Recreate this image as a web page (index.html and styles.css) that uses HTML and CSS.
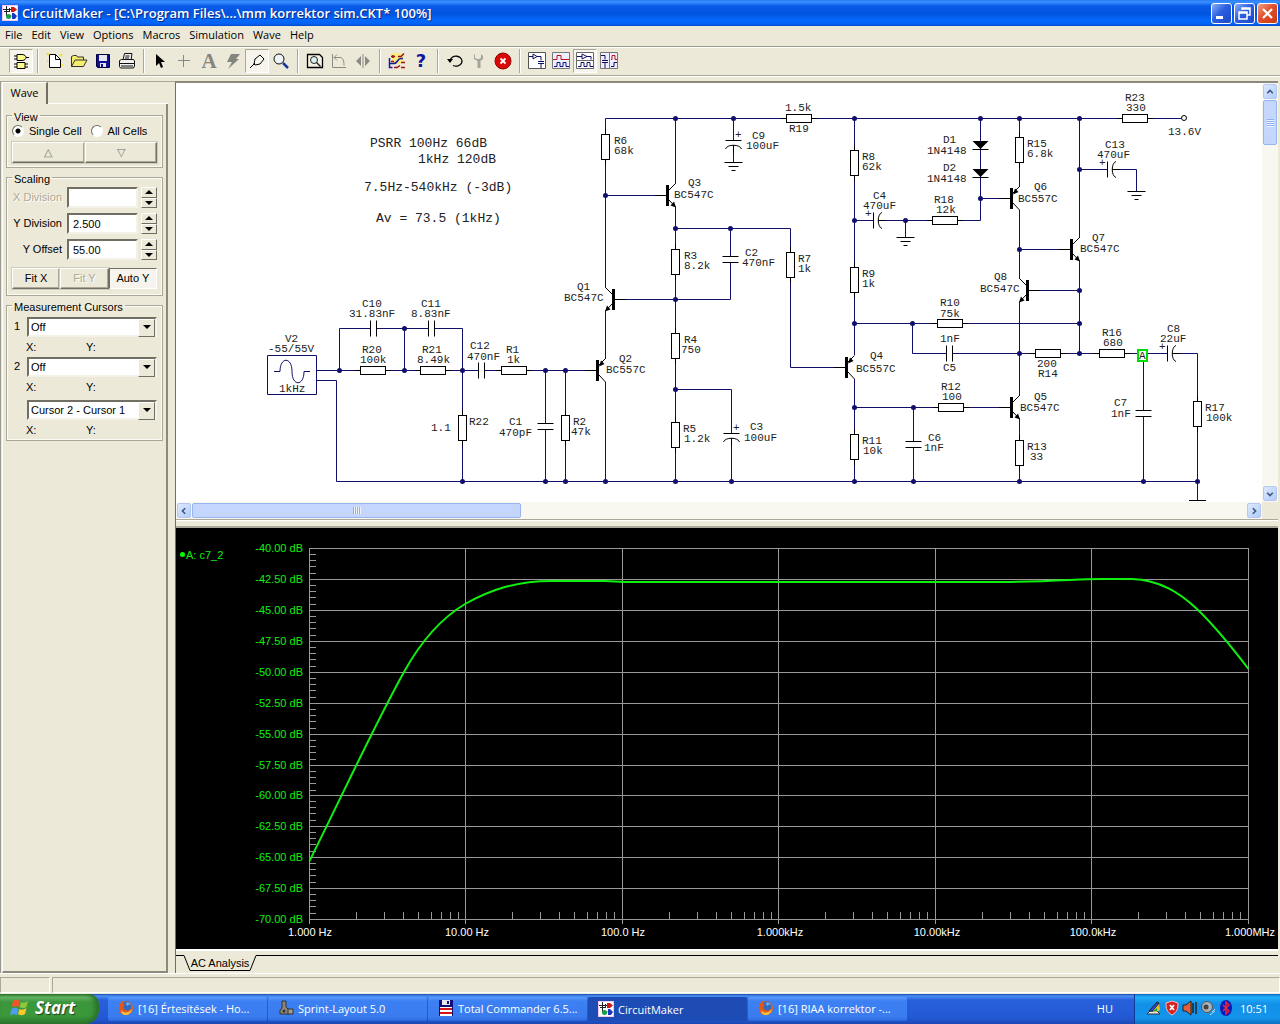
FILE: index.html
```html
<!DOCTYPE html>
<html lang="en">
<head>
<meta charset="utf-8">
<title>CircuitMaker</title>
<link rel="stylesheet" href="styles.css">
</head>
<body>
<svg class="defs" aria-hidden="true">
  <symbol id="app" viewBox="0 0 16 16"><rect width="16" height="16" fill="#f4c8ee"/><rect x="1" y="1" width="14" height="14" fill="#fff"/><path d="M1 4.500h9M4.500 1v10h5M7.500 3v4M2 6.500h5" stroke="#222" fill="none"/><path d="M9 2h3l3 2.500-3 2.500H9z" fill="#d01818"/><circle cx="6.500" cy="11.500" r="2.500" fill="#18a048"/><path d="M10 8h2l3 3-2 3h-3z" fill="#1838c0"/></symbol>
  <symbol id="firefox" viewBox="0 0 16 16"><circle cx="8" cy="8" r="7" fill="#e8641b"/><circle cx="8.500" cy="6.500" r="5" fill="#2f6bc4"/><path d="M8 3c2-1 4 0 5 2-2-1-3 0-4 1z" fill="#6fb4ee"/><path d="M1 6C2 3 3 2 5 1c0 2 0 3 2 4-2 1-2 2-1 4 2 2 5 2 8-1-1 4-3 7-7 7S0 11 1 6z" fill="#e2571a"/><path d="M3 10c2 3 7 4 11-1-1 4-3 6-7 6-2 0-4-2-4-5z" fill="#f8c03a"/></symbol>
</svg>

<header class="titlebar">
  <svg class="i16"><use href="#app"/></svg>
  <h1>CircuitMaker - [C:\Program Files\...\mm korrektor sim.CKT* 100%]</h1>
  <div class="winbtns">
    <button aria-label="Minimize"><svg viewBox="0 0 19 19"><path d="M4 12h7v3H4z" fill="#fff"/></svg></button>
    <button aria-label="Restore"><svg viewBox="0 0 19 19"><path d="M7 6V4h8v7h-3M7 5h8M4 8h8v7H4zM4 9h8" fill="none" stroke="#fff" stroke-width="1.500"/></svg></button>
    <button class="close" aria-label="Close"><svg viewBox="0 0 19 19"><path d="M5 5l9 9M14 5l-9 9" stroke="#fff" stroke-width="2.200"/></svg></button>
  </div>
</header>

<nav class="menu">
  <button>File</button><button>Edit</button><button>View</button><button>Options</button><button>Macros</button><button>Simulation</button><button>Wave</button><button>Help</button>
</nav>

<div class="toolbar">
  <button class="on" aria-label="Parts"><svg viewBox="0 0 18 18"><path d="M5 2.500h5c3 0 4 2 4 3s-1 3-4 3H5zM2 4h3M2 7h3M14 5.500h3M5 10.500h8v6H5zM2 12h3M2 15h3M13 12h3M13 15h3" fill="#ffff90" stroke="#000"/></svg></button>
  <i class="sep"></i>
  <button aria-label="New"><svg viewBox="0 0 18 18"><path d="M3.500 2.500h6l5 5v8h-11z" fill="#fff" stroke="#000"/><path d="M9.500 2.500v5h5" fill="none" stroke="#000"/><path d="M1 1l2 2M16 2l-2 2M1 9h1M16 13h1" stroke="#e8e040" stroke-width="2"/></svg></button>
  <button aria-label="Open"><svg viewBox="0 0 18 18"><path d="M1.500 14.500V4.500l2-1h3l1 1.500h6V8M1.500 14.500L5 8h12l-3.500 6.500z" fill="#f4ee70" stroke="#333"/></svg></button>
  <button aria-label="Save"><svg viewBox="0 0 18 18"><path d="M2.500 2.500h13v13h-12l-1-1z" fill="#101090" stroke="#000040"/><path d="M5 3h8v6H5zM6 11h6v4H6z" fill="#e6e6f0"/><path d="M7 12h2v3H7z" fill="#101090"/></svg></button>
  <button aria-label="Print"><svg viewBox="0 0 18 18"><path d="M5 8l1.500-6.500H14L13 8M7.500 4h4M7 6h4M1.500 8.500l2-1h12l1 1.500v5l-1 2h-13l-1-1.500zM1.500 11.500h15M3 14h12" fill="#efefef" stroke="#111"/></svg></button>
  <i class="sep"></i>
  <button aria-label="Select"><svg viewBox="0 0 18 18"><path d="M4 2v12l3-3 2 5 2-1-2-5h4z" fill="#000"/></svg></button>
  <button aria-label="Wire"><svg viewBox="0 0 18 18"><path d="M7.500 3v12M2 8.500h12" stroke="#888"/></svg></button>
  <button aria-label="Text" class="letter">A</button>
  <button aria-label="Delete"><svg viewBox="0 0 18 18"><path d="M7 2h9l-4 5h3L4 17l4-7H3z" fill="#858580"/></svg></button>
  <button class="on" aria-label="Probe"><svg viewBox="0 0 18 18"><path d="M2 16l5-5M6 12l1-5 5-4 4 4-4 5-5 1z" fill="#f8f8ee" stroke="#000"/></svg></button>
  <button aria-label="Zoom"><svg viewBox="0 0 18 18"><circle cx="7" cy="7" r="5" fill="#eef4f8" stroke="#111"/><path d="M11 11l5 5" stroke="#1838a0" stroke-width="2.500"/></svg></button>
  <i class="sep"></i>
  <button aria-label="Fit to window"><svg viewBox="0 0 18 18"><path d="M1.500 2.500h12l3 3v10h-15z" fill="#f4f2e4" stroke="#000" stroke-width="1.300"/><circle cx="8" cy="8" r="3.500" fill="#d8efec" stroke="#222"/><path d="M10.500 10.500l4 4" stroke="#222" stroke-width="1.500"/></svg></button>
  <button aria-label="Rotate"><svg viewBox="0 0 18 18"><path d="M2.500 2v13.500H16M4 5.500h6c3 0 4 3 4 8M4 5.500l3-3M4 5.500l3 3" fill="none" stroke="#8b8b84"/></svg></button>
  <button aria-label="Mirror"><svg viewBox="0 0 18 18"><path d="M7 4v10L2 9zM11 4v10l5-5z" fill="#8b8b84"/><path d="M9 2v14" stroke="#8b8b84"/></svg></button>
  <i class="sep"></i>
  <button aria-label="Connections"><svg viewBox="0 0 18 18"><path d="M3 1h9l4 3v4l-3 4H4z" fill="#f8ec80"/><path d="M1.500 6v9.500h3M1.500 11.500H6c4 0 3-5 7-5h2" fill="none" stroke="#1818a0" stroke-width="1.500"/><path d="M3 4.500h4M5 3v3M10 4.500h3l3-3M3 9.500h3M13 10.500h4M6 15.500h3l3-2M13 15.500h4" fill="none" stroke="#a01010" stroke-width="1.500"/></svg></button>
  <button aria-label="Help" class="letter help">?</button>
  <i class="sep"></i>
  <button aria-label="Reset"><svg viewBox="0 0 18 18"><path d="M4 9a6 5 0 1 1 3 4.500" fill="none" stroke="#000" stroke-width="1.300"/><path d="M1 7h6l-3 4z" fill="#000"/></svg></button>
  <button aria-label="Step"><svg viewBox="0 0 18 18"><path d="M5 2v4l2 1h2l2-1V2l2 2v3l-2.500 2v7h-3V9L4 7V3z" fill="#a3a39a"/></svg></button>
  <button aria-label="Stop"><svg viewBox="0 0 18 18"><circle cx="9" cy="9" r="8" fill="#d80808" stroke="#900"/><path d="M6.500 6.500l5 5M11.500 6.500l-5 5" stroke="#fff" stroke-width="1.800"/></svg></button>
  <i class="sep"></i>
  <button aria-label="Schematic only"><svg viewBox="0 0 18 18"><path d="M.5.5h17v16H.5z" fill="#fff" stroke="#555"/><path d="M1 4.500h4M5 2v5l4-2.500zM9 4.500h4v4M10 9.500h6M10 11.500h6M13 12v4" fill="none" stroke="#101060"/></svg></button>
  <button aria-label="Waveforms only"><svg viewBox="0 0 18 18"><path d="M.5.5h17v16H.5z" fill="#eef" stroke="#777"/><path d="M1 7.500h4v-4h4v4h8" fill="none" stroke="#c01010"/><path d="M2 14.500h3v-4h3v4h3v-4h3v4h3" fill="none" stroke="#101080"/></svg></button>
  <button class="on" aria-label="Split horizontal"><svg viewBox="0 0 18 18"><path d="M.5.5h17v16H.5zM1 8.500h16" fill="#fff" stroke="#666"/><path d="M1 4.500h5M6 2v5l5-2.500zM11 4.500h4v3M2 14.500h3v-4h3v4h3v-4h3v4h3" fill="none" stroke="#101060"/></svg></button>
  <button aria-label="Split vertical"><svg viewBox="0 0 18 18"><path d="M.5.5h17v16H.5zM9.500 1v15" fill="#eef" stroke="#777"/><path d="M1 3.500h4v4M2 8.500h6M2 10.500h6M5 11v5M11 14.500h3v-4h3" fill="none" stroke="#101060"/><path d="M11 7.500h1v-4h3v4h2" fill="none" stroke="#c01010"/></svg></button>
</div>

<main>
  <aside>
    <div class="tabs"><button class="tab">Wave</button><span class="tabline"></span></div>
    <form class="panel">
      <fieldset>
        <legend>View</legend>
        <div class="radios">
          <label><input type="radio" name="cells" checked>Single Cell</label>
          <label><input type="radio" name="cells">All Cells</label>
        </div>
        <div class="btnrow arrows"><button type="button" aria-label="Previous">△</button><button type="button" aria-label="Next">▽</button></div>
      </fieldset>
      <fieldset class="scaling">
        <legend>Scaling</legend>
        <div class="field"><label for="xd" class="off">X Division</label><input id="xd" type="text"><span class="spin"><button type="button" aria-label="X division up"></button><button type="button" aria-label="X division down"></button></span></div>
        <div class="field"><label for="yd">Y Division</label><input id="yd" type="text" value="2.500"><span class="spin"><button type="button" aria-label="Y division up"></button><button type="button" aria-label="Y division down"></button></span></div>
        <div class="field"><label for="yo">Y Offset</label><input id="yo" type="text" value="55.00"><span class="spin"><button type="button" aria-label="Y offset up"></button><button type="button" aria-label="Y offset down"></button></span></div>
        <div class="btnrow"><button type="button">Fit X</button><button type="button" class="off">Fit Y</button><button type="button" class="pressed">Auto Y</button></div>
      </fieldset>
      <fieldset class="cursors">
        <legend>Measurement Cursors</legend>
        <div class="pick"><label for="c1">1</label><span class="combo"><select id="c1"><option>Off</option></select></span></div>
        <div class="xy"><span>X:</span><span>Y:</span></div>
        <div class="pick"><label for="c2">2</label><span class="combo"><select id="c2"><option>Off</option></select></span></div>
        <div class="xy"><span>X:</span><span>Y:</span></div>
        <div class="pick diff"><span class="combo"><select aria-label="Difference"><option>Cursor 2 - Cursor 1</option></select></span></div>
        <div class="xy"><span>X:</span><span>Y:</span></div>
      </fieldset>
    </form>
  </aside>

  <section class="work">
    <div class="schematic">
      <svg class="sheet" viewBox="176 83 1086 419" width="1086" height="419" role="img" aria-label="Schematic">
        <defs>
          <g id="rv"><path class="lead" d="M.5-18V18"/><rect class="part" x="-3.500" y="-12.500" width="8" height="25"/></g>
          <g id="rh"><path class="lead" d="M-18 .5H18"/><rect class="part" x="-12.500" y="-3.500" width="25" height="8"/></g>
          <g id="cv"><path class="gap" d="M.5-3V3"/><path class="lead" d="M-7.500-2.500h16M-7.500 3.500h16"/></g>
          <g id="ch"><path class="gap" d="M-3 .5H3"/><path class="lead" d="M-2.500-7.500v16M3.500-7.500v16"/></g>
          <g id="pv"><path class="gap" d="M.5 1V5"/><path class="lead" d="M-7.500.5h16M.5 5v8"/><path class="arc" d="M-7.500 9C-6 4 7 4 8.500 9"/></g>
          <g id="ph"><path class="gap" d="M1 .5H6"/><path class="lead" d="M.5-7.500v16M5 .5h8"/><path class="arc" d="M9-7.500C4-6 4 7 9 8.500"/></g>
          <g id="gnd"><path class="lead" d="M-8.500.5h18M-4.500 4.500h10M-1.500 8.500h4"/></g>
          <g id="npn"><path class="lead" d="M-12 .5H0"/><path d="M-1-10h3v21h-3z"/><path class="arc" d="M2-5L8.500-11.500M2 5L8.500 12"/><path d="M9 12.500L3.500 10.500 7 6.500z"/></g>
          <g id="pnp"><path class="lead" d="M-12 .5H0"/><path d="M-1-10h3v21h-3z"/><path class="arc" d="M2-5L8.500-11.500M2 5L8.500 12"/><path d="M2-3.500L4-9.500 7.500-6z"/></g>
          <g id="dio"><path d="M-7.500 0h16L.5 8z"/><path class="lead" d="M-7.500 8.500h16"/></g>
        </defs>
        <g class="wire">
          <path d="M605.500 288V118.500H1181M605.500 195.500H667M675.500 118V184M675.500 207V481M675.500 228.500H790.500V367.500H846M730.500 228V299.500H614M605.500 311V359M605.500 382V481M675.500 389.500H731.500V481M733.500 118V162"/>
          <path d="M317 370.500H597M339.500 370V328.500H462.500V481M404.500 328V370M545.500 370V481M565.500 370V481M317 380.500H336.500V481.500H1197.500"/>
          <path d="M854.500 118V355M854.500 379V481M854 220.500H980.500V118M905.500 220V237M980 198.500H1011M1019.500 118V187M1019.500 210V279M1019.500 302V396M1019.500 419V481M1019 249.500H1071M1079.500 118V238M1079.500 261V353.500M1079 169.500H1136.500V191M1028 290.500H1079M854 323.500H1079M912.500 323V353.500H1197.500V501M854 407.500H1011M913.500 407V481M1143.500 353V481"/>
        </g>
        <path class="dots" d="M675.500 118.500h0M733.500 118.500h0M854.500 118.500h0M980.500 118.500h0M1019.500 118.500h0M1079.500 118.500h0M605.500 195.500h0M675.500 228.500h0M730.500 228.500h0M675.500 299.500h0M675.500 389.500h0M339.500 370.500h0M404.500 328.500h0M404.500 370.500h0M462.500 370.500h0M545.500 370.500h0M565.500 370.500h0M462.500 481.500h0M545.500 481.500h0M565.500 481.500h0M605.500 481.500h0M675.500 481.500h0M731.500 481.500h0M854.500 481.500h0M913.500 481.500h0M1019.500 481.500h0M1143.500 481.500h0M1197.500 481.500h0M854.500 220.500h0M905.500 220.500h0M980.500 198.500h0M1019.500 249.500h0M1079.500 169.500h0M1079.500 290.500h0M1079.500 323.500h0M1079.500 353.500h0M854.500 323.500h0M912.500 323.500h0M1019.500 353.500h0M854.500 407.500h0M913.500 407.500h0"/>
        <use href="#rv" x="605" y="147"/><use href="#rv" x="675" y="262"/><use href="#rv" x="675" y="346"/><use href="#rv" x="675" y="435"/><use href="#rv" x="790" y="265"/><use href="#rv" x="462" y="428"/><use href="#rv" x="565" y="428"/><use href="#rv" x="854" y="163"/><use href="#rv" x="854" y="280"/><use href="#rv" x="854" y="447"/><use href="#rv" x="1019" y="150"/><use href="#rv" x="1019" y="453"/><use href="#rv" x="1197" y="414"/>
        <use href="#rh" x="799" y="118"/><use href="#rh" x="1135" y="118"/><use href="#rh" x="373" y="370"/><use href="#rh" x="433" y="370"/><use href="#rh" x="514" y="370"/><use href="#rh" x="945" y="220"/><use href="#rh" x="950" y="323"/><use href="#rh" x="1048" y="353"/><use href="#rh" x="1112" y="353"/><use href="#rh" x="951" y="407"/>
        <use href="#cv" x="545" y="426"/><use href="#cv" x="730" y="259"/><use href="#cv" x="913" y="444"/><use href="#cv" x="1143" y="413"/>
        <use href="#ch" x="373" y="328"/><use href="#ch" x="431" y="328"/><use href="#ch" x="481" y="370"/><use href="#ch" x="949" y="353"/>
        <use href="#pv" x="733" y="140"/><use href="#pv" x="731" y="433"/>
        <use href="#ph" x="873" y="220"/><use href="#ph" x="1107" y="169"/><use href="#ph" x="1167" y="353"/>
        <use href="#gnd" x="733" y="162"/><use href="#gnd" x="905" y="237"/><use href="#gnd" x="1136" y="191"/><path class="lead" d="M1189 500.500h17"/>
        <use href="#npn" x="667" y="195"/><use href="#npn" x="1011" y="407"/><use href="#npn" x="1071" y="249"/>
        <use href="#npn" transform="translate(614 299) scale(-1 1)"/><use href="#npn" transform="translate(1028 290) scale(-1 1)"/>
        <use href="#pnp" x="597" y="370"/><use href="#pnp" x="846" y="367"/><use href="#pnp" x="1011" y="198"/>
        <use href="#dio" x="980" y="141"/><use href="#dio" x="980" y="169"/>
        <circle class="term" cx="1184" cy="118" r="2.500"/>
        <path class="wire" d="M267.500 355.500h49v39h-49zM274 371.500h6c0-15 12-15 12 0s12 15 12 0h6"/>
        <g class="lbl">
          <text x="614" y="144">R6</text><text x="614" y="154">68k</text><text x="688" y="186">Q3</text><text x="674" y="198">BC547C</text>
          <text x="752" y="139">C9</text><text x="746" y="149">100uF</text><text x="785" y="111">1.5k</text><text x="789" y="132">R19</text>
          <text x="684" y="259">R3</text><text x="684" y="269">8.2k</text><text x="745" y="256">C2</text><text x="742" y="266">470nF</text><text x="798" y="262">R7</text><text x="798" y="272">1k</text>
          <text x="577" y="290">Q1</text><text x="564" y="301">BC547C</text><text x="619" y="362">Q2</text><text x="606" y="373">BC557C</text>
          <text x="684" y="343">R4</text><text x="681" y="353">750</text><text x="683" y="432">R5</text><text x="684" y="442">1.2k</text><text x="750" y="430">C3</text><text x="744" y="441">100uF</text>
          <text x="362" y="307">C10</text><text x="349" y="317">31.83nF</text><text x="421" y="307">C11</text><text x="411" y="317">8.83nF</text>
          <text x="285" y="342">V2</text><text x="268" y="352">-55/55V</text><text x="279" y="392">1kHz</text>
          <text x="362" y="353">R20</text><text x="360" y="363">100k</text><text x="422" y="353">R21</text><text x="417" y="363">8.49k</text>
          <text x="470" y="349">C12</text><text x="467" y="360">470nF</text><text x="506" y="353">R1</text><text x="507" y="363">1k</text>
          <text x="431" y="431">1.1</text><text x="469" y="425">R22</text><text x="509" y="425">C1</text><text x="499" y="436">470pF</text><text x="573" y="425">R2</text><text x="571" y="435">47k</text>
          <text x="862" y="160">R8</text><text x="862" y="170">62k</text><text x="873" y="199">C4</text><text x="863" y="209">470uF</text><text x="934" y="203">R18</text><text x="936" y="213">12k</text>
          <text x="943" y="143">D1</text><text x="927" y="154">1N4148</text><text x="943" y="171">D2</text><text x="927" y="182">1N4148</text>
          <text x="1027" y="147">R15</text><text x="1027" y="157">6.8k</text><text x="1034" y="190">Q6</text><text x="1018" y="202">BC557C</text>
          <text x="862" y="277">R9</text><text x="862" y="287">1k</text><text x="994" y="280">Q8</text><text x="980" y="292">BC547C</text>
          <text x="1125" y="101">R23</text><text x="1126" y="111">330</text><text x="1168" y="135">13.6V</text><text x="1105" y="148">C13</text><text x="1097" y="158">470uF</text>
          <text x="1092" y="241">Q7</text><text x="1080" y="252">BC547C</text>
          <text x="940" y="306">R10</text><text x="940" y="317">75k</text><text x="940" y="342">1nF</text><text x="943" y="371">C5</text>
          <text x="870" y="359">Q4</text><text x="856" y="372">BC557C</text><text x="941" y="390">R12</text><text x="942" y="400">100</text>
          <text x="1037" y="367">200</text><text x="1038" y="377">R14</text><text x="1034" y="400">Q5</text><text x="1020" y="411">BC547C</text>
          <text x="862" y="444">R11</text><text x="863" y="454">10k</text><text x="928" y="441">C6</text><text x="924" y="451">1nF</text><text x="1027" y="450">R13</text><text x="1030" y="460">33</text>
          <text x="1102" y="336">R16</text><text x="1103" y="346">680</text><text x="1167" y="332">C8</text><text x="1160" y="342">22uF</text>
          <text x="1114" y="406">C7</text><text x="1111" y="417">1nF</text><text x="1205" y="411">R17</text><text x="1206" y="421">100k</text>
          <text x="735" y="138">+</text><text x="733" y="431">+</text><text x="865" y="217">+</text><text x="1099" y="166">+</text><text x="1159" y="350">+</text>
        </g>
        <g class="note"><text x="370" y="147">PSRR 100Hz 66dB</text><text x="418" y="163">1kHz 120dB</text><text x="364" y="191">7.5Hz-540kHz (-3dB)</text><text x="376" y="222">Av = 73.5 (1kHz)</text></g>
        <rect class="probe" x="1138" y="350" width="9" height="11"/><g class="lbl"><text x="1139" y="359">A</text></g>
      </svg>
      <div class="vbar"><button aria-label="Scroll up"><svg viewBox="0 0 15 15"><path d="M4 9l3.500-3.500L11 9"/></svg></button><span class="thumb"></span><span class="grow"></span><button aria-label="Scroll down"><svg viewBox="0 0 15 15"><path d="M4 6l3.500 3.500L11 6"/></svg></button></div>
      <div class="hbar"><button aria-label="Scroll left"><svg viewBox="0 0 15 15"><path d="M9 4L5.500 7.500 9 11"/></svg></button><span class="thumb"></span><span class="grow"></span><button aria-label="Scroll right"><svg viewBox="0 0 15 15"><path d="M6 4l3.500 3.500L6 11"/></svg></button></div>
    </div>
    <div class="splitter"></div>
    <div class="graph">
      <svg viewBox="176 528 1102 421" role="img" aria-label="AC Analysis">
        <defs>
          <path id="dec" d="M47.500 912v7M75.500 912v7M94.500 912v7M109.500 912v7M122.500 912v7M132.500 912v7M141.500 912v7M149.500 912v7"/>
          <path id="sub" d="M310 6.500h6M310 12.500h6M310 18.500h6M310 25.500h6"/>
        </defs>
        <g class="grid">
          <path d="M309.500 548.500h939M309.500 579.500h939M309.500 610.500h939M309.500 641.500h939M309.500 672.500h939M309.500 703.500h939M309.500 734.500h939M309.500 765.500h939M309.500 795.500h939M309.500 826.500h939M309.500 857.500h939M309.500 888.500h939M309.500 919.500h939"/>
          <path d="M309.500 548v376M465.500 548v376M622.500 548v376M778.500 548v376M935.500 548v376M1091.500 548v376M1248.500 548v376"/>
          <use href="#dec" x="309"/><use href="#dec" x="465"/><use href="#dec" x="622"/><use href="#dec" x="778"/><use href="#dec" x="935"/><use href="#dec" x="1091"/>
          <use href="#sub" y="548"/><use href="#sub" y="579"/><use href="#sub" y="610"/><use href="#sub" y="641"/><use href="#sub" y="672"/><use href="#sub" y="703"/><use href="#sub" y="734"/><use href="#sub" y="765"/><use href="#sub" y="795"/><use href="#sub" y="826"/><use href="#sub" y="857"/><use href="#sub" y="888"/>
        </g>
        <path class="curve" d="M309.500 861C340 800 375 724 404 672C420 643 440 619 465 604C490 590 515 581 552 581L605 581L625 582H1010C1060 581 1080 579 1100 579H1132C1160 580 1180 593 1197 609C1218 629 1234 650 1248.500 669"/>
        <g class="ylab"><text x="303" y="552">-40.00 dB</text><text x="303" y="583">-42.50 dB</text><text x="303" y="614">-45.00 dB</text><text x="303" y="645">-47.50 dB</text><text x="303" y="676">-50.00 dB</text><text x="303" y="707">-52.50 dB</text><text x="303" y="738">-55.00 dB</text><text x="303" y="769">-57.50 dB</text><text x="303" y="799">-60.00 dB</text><text x="303" y="830">-62.50 dB</text><text x="303" y="861">-65.00 dB</text><text x="303" y="892">-67.50 dB</text><text x="303" y="923">-70.00 dB</text></g>
        <g class="xlab"><text x="310" y="936">1.000 Hz</text><text x="467" y="936">10.00 Hz</text><text x="623" y="936">100.0 Hz</text><text x="780" y="936">1.000kHz</text><text x="937" y="936">10.00kHz</text><text x="1093" y="936">100.0kHz</text><text x="1250" y="936">1.000MHz</text></g>
        <circle cx="182.500" cy="554.500" r="2.500" fill="#0f0"/><g class="trace"><text x="186" y="559">A: c7_2</text></g>
      </svg>
    </div>
    <div class="sheets"><span class="lead-in"></span><button><svg viewBox="0 0 74 17"><path d="M0 .5h1l6 15h60l6-15h1" /></svg><span>AC Analysis</span></button><span class="rest"></span></div>
  </section>
</main>

<footer class="status"><span></span><span></span></footer>

<div class="taskbar">
  <button class="start"><svg viewBox="0 0 20 20"><path d="M3 3c3-2 5-1 7 0L8.500 9c-2-1-4-1-7 0z" fill="#f0562a"/><path d="M11 4c2 1 4 1 7-1l-1.500 6c-3 2-5 1-7 0z" fill="#8cc83c"/><path d="M1.500 11c3-2 5-1 7 0L7 17c-2-1-4-1-7 0z" fill="#4c9cf0"/><path d="M9.500 11c2 1 4 1 7-1L15 16c-3 2-5 1-7 0z" fill="#fcc82c"/></svg>Start</button>
  <div class="tasks">
    <button><svg class="i16"><use href="#firefox"/></svg>[16] Értesítések - Ho...</button>
    <button><svg class="i16" viewBox="0 0 16 16"><path d="M4 1h4v6l3 3v4H2v-4l2-2z" fill="#8a8578" stroke="#333"/><path d="M10 9h5v5h-5z" fill="#a39c88" stroke="#333"/><circle cx="6" cy="11" r="1.500" fill="#333"/></svg>Sprint-Layout 5.0</button>
    <button><svg class="i16" viewBox="0 0 16 16"><path d="M1 0h14v16H1z" fill="#10107a"/><path d="M4 0h8v5H4z" fill="#e8e8f4"/><path d="M9 1h2v3H9z" fill="#10107a"/><path d="M2 7h12v9H2z" fill="#fff"/><path d="M2 8h12v2H2zM2 12h12v2H2z" fill="#d01818"/></svg>Total Commander 6.5...</button>
    <button class="active"><svg class="i16"><use href="#app"/></svg>CircuitMaker</button>
    <button><svg class="i16"><use href="#firefox"/></svg>[16] RIAA korrektor -...</button>
  </div>
  <span class="lang">HU</span>
  <div class="tray">
    <svg class="i16" viewBox="0 0 16 16"><path d="M1 14h13l-3-3H4z" fill="#e8e8e8" stroke="#333"/><path d="M3 11l8-9 2 1-6 8z" fill="#2a46d8" stroke="#222"/><path d="M7 11l6-7 1 6-4 2z" fill="#f0c020"/><path d="M7 11l4-3v3z" fill="#20a040"/></svg>
    <svg class="i16" viewBox="0 0 16 16"><path d="M8 1l6 2c0 6-1 9-6 12C3 12 2 9 2 3z" fill="#d82020" stroke="#f4c0c0"/><path d="M6 5l4 5M10 5l-4 5" stroke="#fff" stroke-width="1.800"/></svg>
    <svg class="i16" viewBox="0 0 16 16"><path d="M1 5h3l5-4v14l-5-4H1z" fill="#e0603a" stroke="#222"/><path d="M11 3v10M14 2v12" stroke="#222" stroke-width="1.500"/></svg>
    <svg class="i16" viewBox="0 0 16 16"><circle cx="7" cy="7" r="5.500" fill="#a8b0b8" stroke="#555"/><circle cx="6" cy="7" r="2.500" fill="#444"/><path d="M12 12l3-3M10 15l5-4" stroke="#bcd8f4"/></svg>
    <svg class="i16" viewBox="0 0 16 16"><ellipse cx="8" cy="8" rx="6" ry="8" fill="#0a1ac0"/><path d="M5 5l6 6-3 3V2l3 3-6 6" fill="none" stroke="#e02838" stroke-width="1.500"/></svg>
    <time>10:51</time>
  </div>
</div>
</body>
</html>
```
FILE: styles.css
```css
* { box-sizing: border-box; }
body {
  margin: 0;
  min-height: 100vh;
  display: flex;
  flex-direction: column;
  background: #ece9d8;
  color: #000;
  font: 11px/13px "Liberation Sans", Arial, sans-serif;
}
button {
  margin: 0;
  padding: 0;
  border: 0;
  background: none;
  color: inherit;
  font: inherit;
}
svg { display: block; }
.defs { position: absolute; width: 0; height: 0; }
.i16 { width: 16px; height: 16px; flex: none; }

.titlebar {
  height: 26px;
  display: flex;
  align-items: center;
  gap: 4px;
  padding: 0 2px;
  background: linear-gradient(#2a7cf4 0, #3c90ff 2px, #0a5ce8 6px, #0254e0 14px, #0468fc 20px, #0462f4 24px, #0347c8);
}
.titlebar h1 {
  flex: 1;
  margin: 0;
  color: #fff;
  font: 600 13px/20px "Open Sans", sans-serif;
  text-shadow: 1px 1px #0a2a88;
}
.winbtns { display: flex; gap: 2px; }
.winbtns button {
  width: 21px;
  height: 21px;
  border: 1px solid #fff;
  border-radius: 3px;
  background: linear-gradient(135deg, #8cb0f8, #2c5ee0 45%, #1c48c8);
}
.winbtns .close { background: linear-gradient(135deg, #f0a088, #e0502c 45%, #c83a14); }

.menu {
  height: 20px;
  display: flex;
  align-items: center;
  gap: 9px;
  padding: 0 5px 3px;
  font-family: "Open Sans", sans-serif;
}
.toolbar {
  height: 30px;
  display: flex;
  align-items: center;
  padding: 0 9px;
  border-top: 1px solid #9c9a8c;
  border-bottom: 1px solid #aca899;
  box-shadow: inset 0 1px #fff, 0 1px #fff;
}
.toolbar button { width: 24px; height: 24px; display: grid; place-items: center; }
.toolbar svg { width: 18px; height: 18px; }
.toolbar .on {
  background: #f6f4ec;
  border: 1px solid;
  border-color: #aca899 #fff #fff #aca899;
}
.toolbar .letter { color: #858580; font: bold 21px/22px "Liberation Serif", serif; }
.toolbar .help { color: #1414a0; font: bold 18px/22px "DejaVu Sans", sans-serif; }
.sep {
  width: 2px;
  height: 24px;
  margin: 0 4px;
  border-left: 1px solid #aca899;
  border-right: 1px solid #fff;
}

main {
  flex: 1;
  display: grid;
  grid-template-columns: 175px minmax(0, 1fr);
  padding: 5px 2px 0 0;
}
aside {
  display: flex;
  flex-direction: column;
  padding-right: 7px;
  border-left: 1px solid #9c9a8c;
  border-top: 1px solid #aca899;
}
.tabs { display: flex; height: 22px; margin-left: 1px; }
.tab {
  width: 46px;
  border-left: 1px solid #fff;
  border-top: 1px solid #fff;
  border-right: 2px solid #716f64;
}
.tabs .tab { padding-bottom: 2px; }
.tabs .tab { font-family: "Open Sans", sans-serif; }
.tabline { flex: 1; border-bottom: 1px solid #fff; }
.panel {
  flex: 1;
  display: flex;
  flex-direction: column;
  gap: 3px;
  margin-left: 1px;
  padding: 5px 3px 0;
  border-left: 1px solid #fff;
  border-right: 2px solid #8c8a7c;
  border-bottom: 2px solid #8c8a7c;
}
fieldset {
  margin: 0;
  padding: 0 5px 4px;
  min-width: 0;
  border: 1px solid #aca899;
  box-shadow: inset 0 0 0 1px #fbfaf4;
}
legend { padding: 0 2px; height: 13px; line-height: 17px; }
.radios { display: flex; gap: 9px; height: 18px; align-items: center; }
.radios label { display: flex; align-items: center; gap: 5px; white-space: nowrap; }
input[type=radio] {
  appearance: none;
  width: 12px;
  height: 12px;
  margin: 0;
  border: 1px solid;
  border-color: #716f64 #fff #fff #716f64;
  border-radius: 50%;
  background: #fff;
}
input[type=radio]:checked { background: radial-gradient(#000 2px, #fff 3px); }
.btnrow { display: flex; height: 21px; margin-top: 2px; }
.btnrow button {
  flex: 1;
  border: 1px solid;
  border-color: #fff #716f64 #716f64 #fff;
  box-shadow: inset -1px -1px #aca899, 0 0 0 1px #d0ccbc;
}
.btnrow .pressed { background: #f6f4ec; border-color: #716f64 #fff #fff #716f64; box-shadow: none; }
.arrows button { color: #77756a; }
.off { color: #aca899; text-shadow: 1px 1px #fff; }
.scaling .btnrow { margin: 8px 0 2px; }
.field { display: flex; align-items: center; gap: 3px; height: 21px; margin-top: 5px; }
legend + .field { margin-top: 3px; }
.field label { flex: 1; text-align: right; white-space: nowrap; padding-right: 2px; }
.field input {
  width: 71px;
  height: 21px;
  padding: 0 4px;
  border: 2px solid;
  border-color: #716f64 #f4f2e8 #f4f2e8 #716f64;
  background: #fff;
  font: inherit;
}
.spin { display: flex; flex-direction: column; width: 16px; height: 21px; }
.spin button {
  flex: 1;
  display: grid;
  place-items: center;
  border: 1px solid;
  border-color: #fff #716f64 #716f64 #fff;
}
.spin button::before { content: ""; border: 4px solid transparent; border-top: 0; border-bottom: 4px solid #000; }
.spin button:last-child::before { border-bottom: 0; border-top: 4px solid #000; }
.cursors legend { margin-bottom: 5px; }
.cursors { padding-bottom: 0; }
.pick { display: flex; justify-content: space-between; height: 20px; padding-left: 2px; }
.pick label { padding-top: 3px; }
.pick.diff { justify-content: flex-end; margin-top: 3px; }
.combo { position: relative; width: 130px; }
.combo select {
  appearance: none;
  width: 100%;
  height: 20px;
  padding: 0 2px;
  border: 2px solid;
  border-color: #716f64 #f4f2e8 #f4f2e8 #716f64;
  border-radius: 0;
  background: #fff;
  color: #000;
  font: inherit;
}
.combo::before, .combo::after { content: ""; position: absolute; pointer-events: none; }
.combo::before {
  z-index: 1;
  top: 2px;
  right: 2px;
  width: 15px;
  height: 16px;
  background: #ece9d8;
  border: 1px solid;
  border-color: #fff #716f64 #716f64 #fff;
}
.combo::after { z-index: 2; top: 8px; right: 6px; border: 4px solid transparent; border-bottom: 0; border-top-color: #000; }
.xy { display: flex; height: 20px; align-items: center; padding-left: 14px; }
.xy span { width: 60px; }

.work {
  min-width: 0;
  display: flex;
  flex-direction: column;
  border-left: 1px solid #716f64;
  border-top: 2px solid #8c8a7c;
}
.schematic {
  display: grid;
  grid-template-columns: minmax(0, 1fr) 16px;
  grid-template-rows: auto 17px;
}
.sheet { background: #fff; justify-self: stretch; overflow: hidden; max-width: 100%; }
.wire { fill: none; stroke: #10106a; }
.lead { fill: none; stroke: #000; }
.arc { fill: none; stroke: #000; }
.part { fill: #fff; stroke: #000; }
.gap { stroke: #fff; stroke-width: 3px; }
.dots { fill: none; stroke: #10106a; stroke-width: 5px; stroke-linecap: round; }
.term { fill: #fff; stroke: #000; }
.probe { fill: #fff; stroke: #0d0; stroke-width: 2px; }
.lbl { font: 11px "Liberation Mono", monospace; fill: #222; }
.note { font: 13px "Liberation Mono", monospace; fill: #222; }
.vbar, .hbar { display: flex; background: #f8f7f0; padding: 1px; }
.vbar { flex-direction: column; }
.hbar button, .vbar button {
  width: 14px;
  height: 15px;
  flex: none;
  border: 1px solid #b4c8f4;
  border-radius: 2px;
  background: linear-gradient(135deg, #dce8fe, #b4ccfa);
}
.hbar path, .vbar path { fill: none; stroke: #3c5880; stroke-width: 2px; }
.thumb {
  border: 1px solid #98b4ec;
  border-radius: 2px;
  background: repeating-linear-gradient(#8cb0f8 0 1px, #eef4fe 1px 2px) center / 7px 8px no-repeat, #c4d6fc;
}
.vbar .thumb { height: 45px; margin-top: 1px; }
.hbar .thumb {
  width: 329px;
  margin-left: 1px;
  background: repeating-linear-gradient(90deg, #8cb0f8 0 1px, #eef4fe 1px 2px) center / 8px 7px no-repeat, #c4d6fc;
}
.grow { flex: 1; }
.splitter { height: 9px; border-top: 1px solid #aca899; border-bottom: 2px solid #aca899; box-shadow: inset 0 1px #fff; }
.graph { flex: 1; background: #000; }
.graph svg { width: 100%; }
.grid { fill: none; stroke: #9a9a9a; }
.curve { fill: none; stroke: #10f010; stroke-width: 2px; }
.ylab { fill: #10f010; font-size: 11px; text-anchor: end; }
.trace { fill: #10f010; font-size: 11px; }
.xlab { fill: #fff; font-size: 11px; text-anchor: middle; }
.sheets { display: flex; height: 24px; padding-top: 6px; box-shadow: inset 0 2px #fff, inset 0 5px #ece9d8; }
.lead-in { width: 7px; border-top: 1px solid #000; }
.rest { flex: 1; border-top: 1px solid #000; }
.sheets button { position: relative; width: 74px; height: 17px; }
.sheets svg { position: absolute; inset: 0; width: 74px; height: 17px; fill: none; stroke: #000; }
.sheets button span { position: relative; }

.status { height: 21px; display: flex; gap: 2px; padding: 3px 0 1px; border-top: 1px solid #fff; }
.status span { border: 1px solid; border-color: #aca899 #fff #fff #aca899; }
.status span:first-child { width: 50px; }
.status span:last-child { flex: 1; }

.taskbar {
  height: 30px;
  display: flex;
  align-items: stretch;
  color: #fff;
  font-family: "Open Sans", sans-serif;
  background: linear-gradient(#1c48b0 0, #4890f4 2px, #2860dc 6px, #2258d4 24px, #1c48b4);
}
.start {
  width: 99px;
  display: flex;
  align-items: center;
  gap: 5px;
  padding: 0 10px 2px;
  border-radius: 0 10px 14px 0;
  background: linear-gradient(#2c7a2c 0, #68b868 3px, #3c963c 8px, #3a983a 22px, #2c762c);
  box-shadow: inset -4px 0 5px #2a702a;
}
.taskbar .start {
  font: italic bold 17px/20px "Open Sans", sans-serif;
  text-shadow: 1px 1px 1px #204020;
}
.start svg { width: 20px; height: 20px; }
.tasks { flex: 1; display: flex; gap: 1px; padding: 3px 0 3px 9px; }
.tasks button {
  width: 159px;
  display: flex;
  align-items: center;
  gap: 4px;
  padding: 0 10px 2px;
  border-radius: 2px;
  background: linear-gradient(#5c9cfc 0, #3c80f4 4px, #3a7cf0 20px, #2c68dc);
  white-space: nowrap;
}
.tasks .active { background: #1c4cb4; padding-bottom: 0; }
.lang { align-self: center; margin-right: 21px; padding-bottom: 2px; }
.tray {
  width: 146px;
  display: flex;
  align-items: center;
  gap: 2px;
  padding: 0 0 2px 11px;
  border-left: 1px solid #0c3c98;
  background: linear-gradient(#0c6cc8 0, #20b0f8 3px, #1290e8 10px, #1494ea 24px, #0c70c4);
}
.tray time { margin-left: 4px; }
```
